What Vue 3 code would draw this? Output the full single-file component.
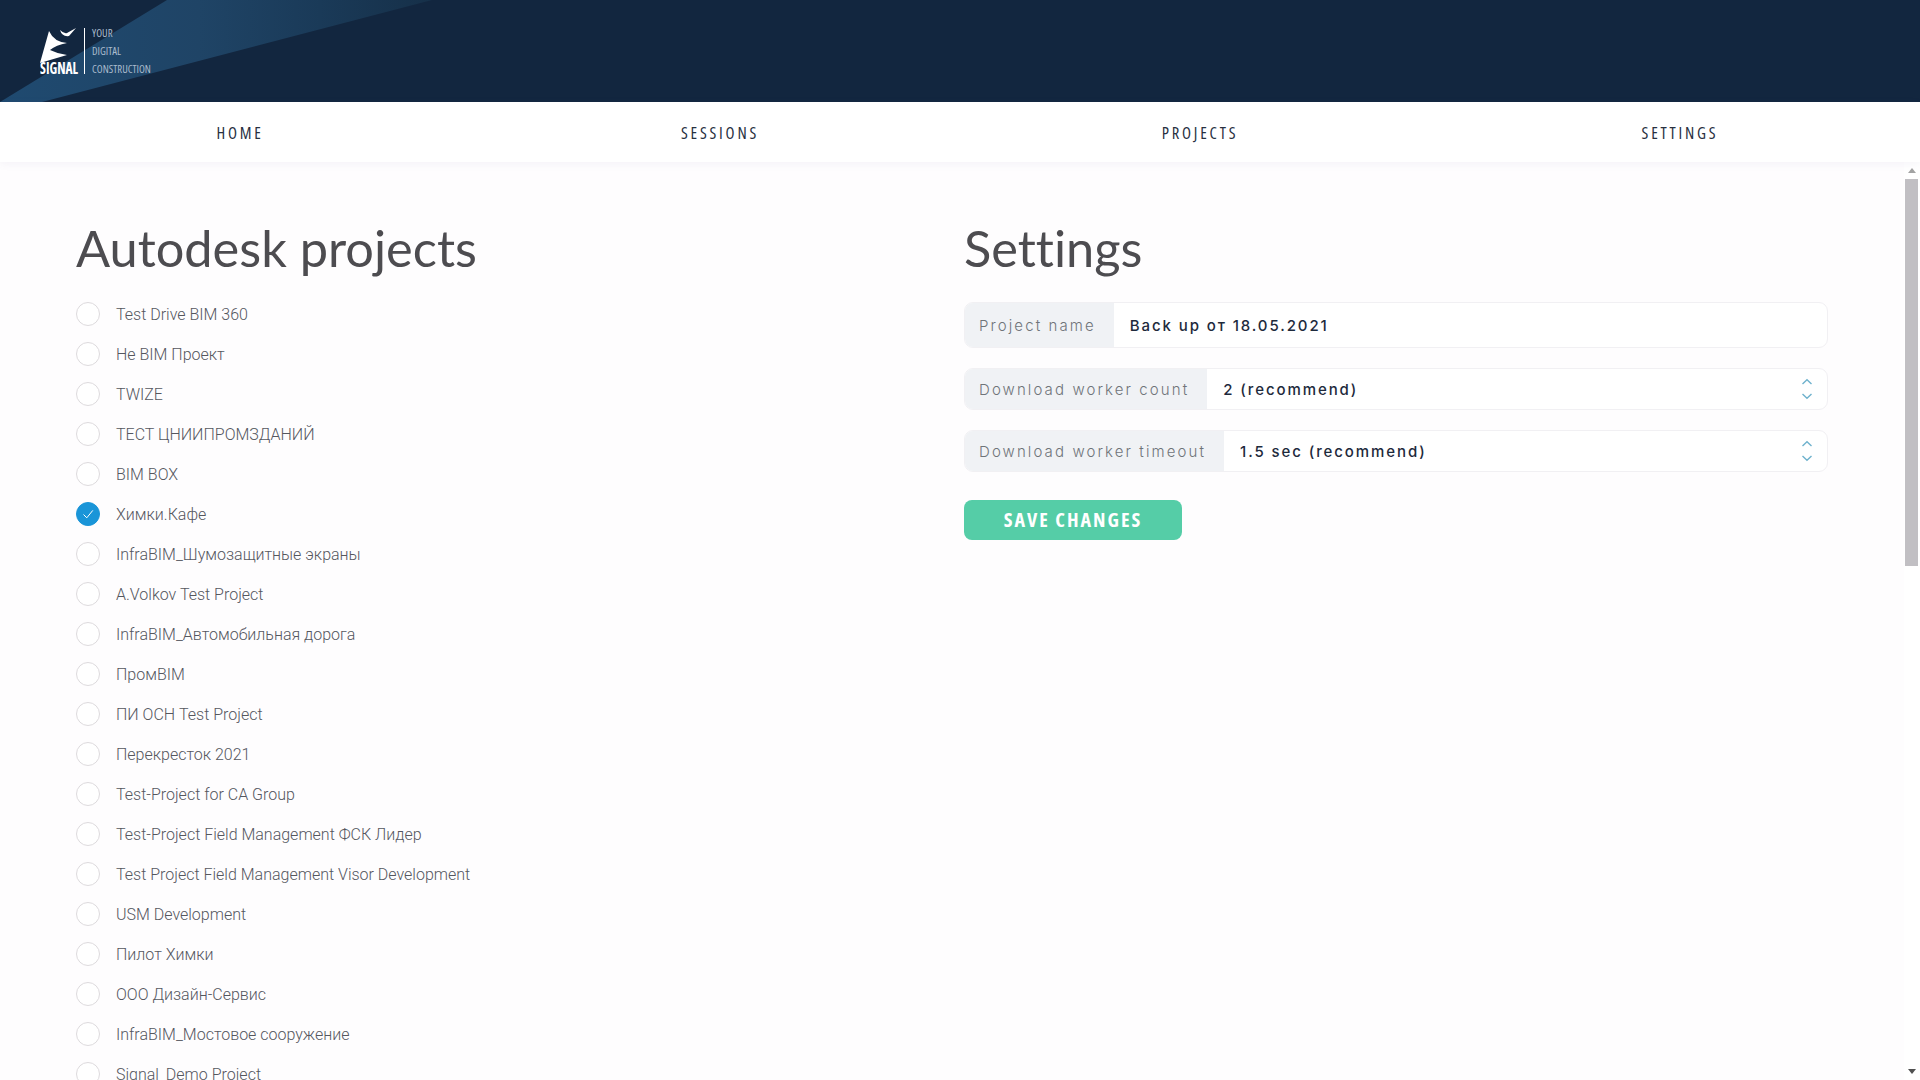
<template>
  <div class="app">
    <header class="top">
      <div class="logo">
        <div class="mark">
          <svg width="36" height="35" viewBox="0 0 36 35">
            <path d="M9 3 L0 35 L27 27 Q18 26 10 22 Q16 17 27 15 Q14 14 9 3 Z" fill="#fff" />
            <path d="M20 2 Q24 6 27 5 L36 0 L29 8 Q22 9 20 2 Z" fill="#fff" />
          </svg>
          <span class="mark-name">SIGNAL</span>
        </div>
        <div class="slogan">
          <span>YOUR</span>
          <span>DIGITAL</span>
          <span>CONSTRUCTION</span>
        </div>
      </div>
    </header>

    <nav class="menu">
      <a v-for="item in menu" :key="item">{{ item }}</a>
    </nav>

    <div class="body">
      <main class="pane">
        <div class="columns">
          <section>
            <h1>Autodesk projects</h1>
            <ul class="projects">
              <li v-for="project in projects" :key="project">
                <span class="radio" :class="{ on: project === selected }">
                  <svg v-if="project === selected" width="14" height="14" viewBox="0 0 14 14">
                    <path d="M2.5 7.5 L5.8 10.8 L11.8 3.4" fill="none" stroke="#fff" stroke-width="1" />
                  </svg>
                </span>
                <span>{{ project }}</span>
              </li>
            </ul>
          </section>

          <section>
            <h1>Settings</h1>
            <form class="form">
              <div class="field first">
                <label for="name">Project name</label>
                <input id="name" type="text" v-model="projectName">
              </div>
              <div class="field" v-for="field in selects" :key="field.id">
                <label :for="field.id">{{ field.label }}</label>
                <select :id="field.id">
                  <option>{{ field.value }}</option>
                </select>
                <svg class="chevrons" width="12" height="22" viewBox="0 0 12 22">
                  <path d="M1.5 6 L6 1.8 L10.5 6 M1.5 16 L6 20.2 L10.5 16" fill="none" stroke="#6fb2cd" stroke-width="1.4" />
                </svg>
              </div>
              <button type="button" class="save">SAVE CHANGES</button>
            </form>
          </section>
        </div>
      </main>

      <div class="scrollbar">
        <span class="arrow up"></span>
        <div class="track"><div class="thumb"></div></div>
        <span class="arrow down"></span>
      </div>
    </div>
  </div>
</template>

<script setup>
import { ref } from 'vue'

const menu = ['HOME', 'SESSIONS', 'PROJECTS', 'SETTINGS']

const projects = [
  'Test Drive BIM 360',
  'Не BIM Проект',
  'TWIZE',
  'ТЕСТ ЦНИИПРОМЗДАНИЙ',
  'BIM BOX',
  'Химки.Кафе',
  'InfraBIM_Шумозащитные экраны',
  'A.Volkov Test Project',
  'InfraBIM_Автомобильная дорога',
  'ПромBIM',
  'ПИ ОСН Test Project',
  'Перекресток 2021',
  'Test-Project for CA Group',
  'Test-Project Field Management ФСК Лидер',
  'Test Project Field Management Visor Development',
  'USM Development',
  'Пилот Химки',
  'ООО Дизайн-Сервис',
  'InfraBIM_Мостовое сооружение',
  'Signal_Demo Project'
]

const selected = 'Химки.Кафе'
const projectName = ref('Back up от 18.05.2021')

const selects = [
  { id: 'count', label: 'Download worker count', value: '2 (recommend)' },
  { id: 'timeout', label: 'Download worker timeout', value: '1.5 sec (recommend)' }
]
</script>

<style>
html, body {
  height: 100%;
  overflow: hidden;
}
</style>

<style scoped>
.app {
  display: flex;
  flex-direction: column;
  height: 100vh;
  font-family: Roboto, "Liberation Sans", sans-serif;
  background: #fefdfe;
}

.top {
  position: relative;
  flex: none;
  height: 102px;
  display: flex;
  align-items: center;
  padding-left: 40px;
  background: #12263f;
  overflow: hidden;
}

.top::before {
  content: "";
  position: absolute;
  inset: 0;
  background: linear-gradient(90deg, #1f4a70 0, #1f4466 200px, #1a3a58 320px, #163049 430px);
  clip-path: polygon(0 102px, 167px 0, 432px 0, 42px 102px);
}

.logo {
  position: relative;
  display: flex;
  align-items: center;
}

.mark {
  display: flex;
  flex-direction: column;
  width: 44px;
}

.mark svg {
  display: block;
  margin-bottom: -1px;
}

.mark-name {
  font-family: "Open Sans", sans-serif;
  font-stretch: 75%;
  font-weight: 700;
  font-size: 16px;
  line-height: 13px;
  color: #fff;
  white-space: nowrap;
  transform: scaleX(0.84);
  transform-origin: left;
}

.slogan {
  display: flex;
  flex-direction: column;
  gap: 8px;
  height: 46px;
  padding-left: 7px;
  border-left: 1px solid #fff;
  font-family: "Open Sans", sans-serif;
  font-stretch: 75%;
  font-size: 10.8px;
  line-height: 10px;
  color: #a9bbcd;
}

.menu {
  flex: none;
  position: relative;
  z-index: 1;
  height: 60px;
  display: grid;
  grid-template-columns: repeat(4, 1fr);
  align-items: center;
  background: #fff;
  box-shadow: 0 2px 8px rgba(120, 100, 150, 0.07);
}

.menu a {
  text-align: center;
  font-family: "Open Sans", sans-serif;
  font-stretch: 75%;
  font-size: 16.5px;
  letter-spacing: 2.8px;
  color: #28303f;
}

.body {
  flex: 1;
  min-height: 0;
  display: flex;
}

.pane {
  flex: 1;
  min-width: 0;
  overflow: hidden;
  padding: 0 76px;
}

.scrollbar {
  flex: none;
  width: 16px;
  display: flex;
  flex-direction: column;
  align-items: center;
  background: #fff;
}

.arrow {
  flex: none;
  width: 0;
  height: 0;
  margin: 6px 0;
  border-left: 4px solid transparent;
  border-right: 4px solid transparent;
}

.arrow.up {
  border-bottom: 5px solid #a3a3a3;
}

.arrow.down {
  border-top: 5px solid #505050;
}

.track {
  flex: 1;
  width: 100%;
}

.thumb {
  height: 387px;
  margin: 0 2px 0 1px;
  background: #c1bfc3;
}

.columns {
  display: grid;
  grid-template-columns: 1fr 1fr;
  gap: 24px;
  padding-top: 54px;
}

h1 {
  margin: 0;
  font-family: Lato, sans-serif;
  font-variant-ligatures: none;
  font-weight: 400;
  font-size: 50.5px;
  line-height: 64px;
  color: #4d4c50;
}

.projects {
  list-style: none;
  margin: 14px 0 0;
  padding: 0;
}

.projects li {
  display: flex;
  align-items: center;
  gap: 16px;
  height: 40px;
  font-size: 16px;
  font-weight: 300;
  color: #55575e;
}

.radio {
  flex: none;
  display: flex;
  align-items: center;
  justify-content: center;
  width: 24px;
  height: 24px;
  box-sizing: border-box;
  border: 1px solid #dddadd;
  border-radius: 50%;
  background: #fff;
}

.radio.on {
  background: #1a95d8;
  border-color: #1a95d8;
}

.form {
  margin-top: 22px;
}

.field {
  position: relative;
  display: flex;
  height: 42px;
  margin-bottom: 20px;
  box-sizing: border-box;
  border: 1px solid #f1f0f3;
  border-radius: 9px;
  overflow: hidden;
  background: #fff;
}

.field.first {
  height: 46px;
}

.field label {
  display: flex;
  align-items: center;
  padding: 0 18px 0 15px;
  margin: -1px 0 -1px -1px;
  background: #f0f2f5;
  font-family: Inter, sans-serif;
  font-weight: 300;
  font-size: 15px;
  letter-spacing: 2.1px;
  color: #6f7479;
  white-space: nowrap;
}

.field input,
.field select {
  flex: 1;
  min-width: 0;
  padding: 0 16px;
  border: 0;
  outline: 0;
  background: transparent;
  appearance: none;
  font-family: Inter, sans-serif;
  font-weight: 500;
  font-size: 15px;
  letter-spacing: 1.9px;
  color: #1e2a3c;
}

.chevrons {
  position: absolute;
  right: 14px;
  top: 9px;
}

.save {
  display: block;
  width: 218px;
  height: 40px;
  margin-top: 28px;
  padding: 0 0 2px;
  border: 0;
  border-radius: 8px;
  background: #55cda7;
  font-family: "Open Sans", sans-serif;
  font-stretch: 75%;
  font-weight: 700;
  font-size: 20px;
  letter-spacing: 2px;
  color: #fff;
}
</style>
